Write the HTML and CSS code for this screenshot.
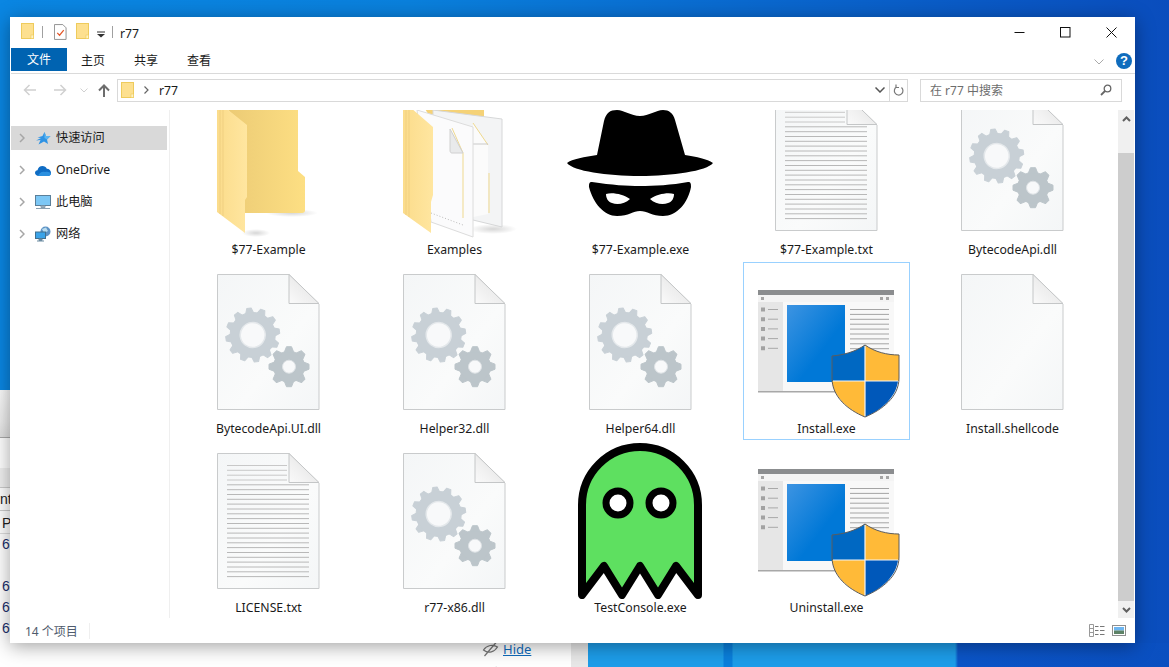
FILE: index.html
```html
<!DOCTYPE html>
<html lang="zh-CN">
<head>
<meta charset="utf-8">
<title>r77</title>
<link rel="stylesheet" href="styles.css">
</head>
<body>
<svg class="defs" aria-hidden="true">
  <defs>
    <linearGradient id="gBack" x1="0" y1="0" x2="1" y2="0"><stop offset="0" stop-color="#eccb75"/><stop offset="1" stop-color="#fddf83"/></linearGradient>
    <linearGradient id="gFront" x1="0" y1="0" x2="1" y2="0"><stop offset="0" stop-color="#fbdc8b"/><stop offset="1" stop-color="#ffe6a0"/></linearGradient>
    <linearGradient id="gBlue" x1="0" y1="0" x2="1" y2="1"><stop offset="0" stop-color="#3d94e2"/><stop offset=".6" stop-color="#0078d7"/></linearGradient>
    <linearGradient id="gDoc" x1="0" y1="0" x2="1" y2="1"><stop offset="0" stop-color="#f4f6f7"/><stop offset=".6" stop-color="#fafbfb"/><stop offset="1" stop-color="#f4f6f7"/></linearGradient>
    <linearGradient id="gFold" x1="0" y1="1" x2="1" y2="0"><stop offset="0" stop-color="#fafafa"/><stop offset="1" stop-color="#dfdfdf"/></linearGradient>
    <radialGradient id="gShadow"><stop offset="0" stop-color="#000" stop-opacity=".16"/><stop offset="1" stop-color="#000" stop-opacity="0"/></radialGradient>

    <path id="toothA" d="M-4 -22L-2.200 -27H2.200L4 -22Z"/>
    <path id="toothB" d="M-4.500 -15L-2.500 -20H2.500L4.500 -15Z"/>

    <symbol id="doc" viewBox="0 0 167 158">
      <path d="M33.500 12.500H105L135 42V147.500H33.500Z" fill="url(#gDoc)" stroke="#c9cbcc"/>
      <path d="M105 12.500V41.500H135Z" fill="url(#gFold)" stroke="#c4c6c7"/>
    </symbol>
    <symbol id="blank" viewBox="1 0 167 158"><use href="#doc"/></symbol>
    <symbol id="gears" viewBox="1 0 167 158">
      <use href="#doc"/>
      <g transform="translate(68.700 73) rotate(-8)" fill="#c8d0d6" stroke="#c8d0d6" stroke-linejoin="round">
        <circle r="22.500"/>
        <use href="#toothA"/>
        <use href="#toothA" transform="rotate(30)"/>
        <use href="#toothA" transform="rotate(60)"/>
        <use href="#toothA" transform="rotate(90)"/>
        <use href="#toothA" transform="rotate(120)"/>
        <use href="#toothA" transform="rotate(150)"/>
        <use href="#toothA" transform="rotate(180)"/>
        <use href="#toothA" transform="rotate(210)"/>
        <use href="#toothA" transform="rotate(240)"/>
        <use href="#toothA" transform="rotate(270)"/>
        <use href="#toothA" transform="rotate(300)"/>
        <use href="#toothA" transform="rotate(330)"/>
        <circle r="12.500" fill="#f8f9fa" stroke="#e4e8eb" stroke-width="1.500"/>
      </g>
      <g transform="translate(105 104.700)" fill="#bcc5ca" stroke="#bcc5ca" stroke-linejoin="round">
        <circle r="15.500"/>
        <use href="#toothB"/>
        <use href="#toothB" transform="rotate(45)"/>
        <use href="#toothB" transform="rotate(90)"/>
        <use href="#toothB" transform="rotate(135)"/>
        <use href="#toothB" transform="rotate(180)"/>
        <use href="#toothB" transform="rotate(225)"/>
        <use href="#toothB" transform="rotate(270)"/>
        <use href="#toothB" transform="rotate(315)"/>
        <circle r="6.500" fill="#f8f9fa" stroke="#dfe3e6"/>
      </g>
    </symbol>
    <symbol id="textdoc" viewBox="1 0 167 158">
      <use href="#doc"/>
      <path d="M43 24.500H103M43 29.300H103M43 34.200H103M43 39H103" stroke="#c8c8c8" fill="none"/>
      <path d="M43 43.800H125M43 48.700H125M43 53.500H125M43 58.300H125M43 63.100H125M43 68H125M43 72.800H125M43 77.600H125M43 82.500H125M43 87.300H125M43 92.100H125M43 97H125M43 101.800H125M43 106.600H125M43 111.500H125M43 116.300H125M43 121.100H125M43 126H125M43 130.800H125M43 135.600H125" stroke="#b8b8b8" fill="none"/>
    </symbol>
    <symbol id="folder" viewBox="1 0 167 158">
      <ellipse cx="108" cy="130" rx="26" ry="4" fill="url(#gShadow)"/>
      <ellipse cx="72" cy="150" rx="14" ry="4" fill="url(#gShadow)"/>
      <path d="M44 12H114V88L121 94V127.500C121 129 120 130 118 130H60V42L44 27Z" fill="url(#gBack)"/>
      <path d="M33 18L63 42V114L61 117V150L33 129Z" fill="url(#gFront)"/>
      <path d="M36 20V131M39 22V133" stroke="#f0cf80" fill="none"/>
    </symbol>
    <symbol id="folderdocs" viewBox="0 0 167 158">
      <ellipse cx="122" cy="146" rx="24" ry="5" fill="url(#gShadow)"/>
      <path d="M46 12H113V36H60Z" fill="#f5d277"/>
      <path d="M62 27L131 36V144L102 137L62 130Z" fill="#f3f4f5" stroke="#d6d7d8"/>
      <path d="M102 40L117 62V131L102 134Z" fill="#fbfbfb"/>
      <path d="M102 40L117 62M118 90V130" stroke="#efd98f" fill="none"/>
      <path d="M102 61H117" stroke="#c9c9c9" fill="none"/>
      <path d="M46 27L102 44V154L60 139Z" fill="#fbfbfc" stroke="#dcdcdc"/>
      <path d="M81 45L92 70V135" fill="none" stroke="#efd98f"/>
      <path d="M79 46L92 70H81C79.500 70 79 69 79 67Z" fill="#e9eaeb" stroke="#d0d0d0"/>
      <path d="M60 130L92 142" stroke="#bbb" stroke-dasharray="1 2" fill="none"/>
      <path d="M32 18L62 44V112L60 119V150L32 130Z" fill="url(#gFront)"/>
      <path d="M35 20V132M38 22V134" stroke="#f0cf80" fill="none"/>
    </symbol>
    <symbol id="spy" viewBox="0 0 167 158">
      <path d="M10 80C15 76 28 74 40 72L47 38C49 30 53 27 60 27C67 27 74 33 83 33C92 33 99 27 106 27C112 27 116 30 118 37L128 72C140 74 150 76 156 80C150 88 115 93 83 93C50 93 16 88 10 80Z" fill="#000"/>
      <path d="M35 99C55 102 70 103 83 103C97 103 115 102 131 99C134 99 134 101 134 104C131 120 120 133 106 133C95 133 90 128 83 128C76 128 72 133 60 133C47 133 36 120 32 104C32 101 32 99 35 99Z" fill="#000"/>
      <path d="M49 111C55 109 66 111 73 116C68 121 60 122 55 120C51 119 49 115 49 111Z" fill="#fff"/>
      <path d="M117 111C111 109 100 111 93 116C98 121 106 122 111 120C115 119 117 115 117 111Z" fill="#fff"/>
    </symbol>
    <symbol id="ghost" viewBox="0 0 167 158">
      <path d="M25 154V64A58 58 0 0 1 141 64V154L119 125L101 154L83 125L65 154L47 125Z" fill="#5ee060" stroke="#000" stroke-width="8" stroke-linejoin="round"/>
      <circle cx="61" cy="62" r="12" fill="#fff" stroke="#000" stroke-width="7"/>
      <circle cx="104" cy="62" r="12" fill="#fff" stroke="#000" stroke-width="7"/>
    </symbol>
    <symbol id="setup" viewBox="0 0 167 158">
      <rect x="15" y="28" width="136" height="102" fill="#f8f8f8"/>
      <rect x="15" y="28" width="136" height="5" fill="#8b8d8f"/>
      <rect x="15" y="33" width="136" height="7" fill="#f4f4f4"/>
      <rect x="15" y="40" width="25" height="90" fill="#e6e6e6"/>
      <rect x="15" y="129" width="136" height="1.500" fill="#a8a8a8"/>
      <path d="M143 35h3v3h-3zM137 35h3v3h-3zM18 35h3v3h-3z" fill="#a5a5a5"/>
      <rect x="44" y="43" width="58" height="77" fill="url(#gBlue)"/>
      <path d="M107 47.500H146M107 52.400H146M107 57.300H146M107 62.200H146M107 67.100H146M107 72H146M107 76.900H146M107 81.800H146M107 86.700H146" stroke="#a4a4a4" fill="none"/>
      <path d="M25 47.500H35M25 57.200H35M25 66.900H35M25 76.600H35M25 86.300H35" stroke="#a8a8a8" fill="none"/>
      <path d="M18 45.500h4v4h-4zM18 55.200h4v4h-4zM18 64.900h4v4h-4zM18 74.600h4v4h-4zM18 84.300h4v4h-4z" fill="#a2a2a2"/>
      <path d="M122 83C112 90 100 93 89 94V119H122Z" fill="#0068c2"/>
      <path d="M122 83C132 90 144 93 156 93V119H122Z" fill="#ffba38"/>
      <path d="M89 119C91 135 105 148 122 155V119Z" fill="#ffba38"/>
      <path d="M155 119C153 135 139 148 122 155V119Z" fill="#0058ba"/>
      <path d="M122 84V155M90 119H155" stroke="#f4f4f4" stroke-width="1.200" fill="none"/>
      <path d="M122 83C112 90 100 93 89 94V116C89 135 105 148 122 155C139 148 156 135 156 116V93C144 93 132 90 122 83Z" fill="none" stroke="#5c5c5c"/>
    </symbol>
    <symbol id="mini-folder" viewBox="0 0 14 18">
      <rect x=".5" y=".5" width="12" height="15" fill="#fde08f" stroke="#eecb5c"/>
      <rect x="10" y="12" width="2.500" height="3.500" fill="#fff3c4" stroke="#eecb5c" stroke-width=".6"/>
    </symbol>
  </defs>
</svg>

<div class="backwin">
  <div class="bw-head"></div>
  <div class="bw-space"></div>
  <div class="bw-band"></div>
  <div class="bw-row bw-tall"><span class="bw-clip">nt</span></div>
  <div class="bw-row bw-p">P</div>
  <div class="bw-num">6-</div>
  <div class="bw-num bw-gap">6-</div>
  <div class="bw-num">6-</div>
  <div class="bw-num">6-</div>
  <div class="bw-links">
    <div class="bw-link">
      <svg class="eye" viewBox="0 0 16 16"><path d="M1 9C4 4 11 3 15 6C12 11 6 13 1 9ZM2 15L14 1" fill="none" stroke="#777" stroke-width="1.200"/></svg>
      <span class="hide">Hide</span>
    </div>
    <div class="bw-link">
      <svg class="eye" viewBox="0 0 16 16"><path d="M1 9C4 4 11 3 15 6M2 15L14 1" fill="none" stroke="#777" stroke-width="1.200"/></svg>
      <span class="hide">Hide</span>
    </div>
  </div>
</div>

<main class="window">
  <header class="titlebar">
    <svg class="mini"><use href="#mini-folder"/></svg>
    <i class="qsep qsep-a"></i>
    <svg class="qdoc" viewBox="0 0 14 17"><path d="M.5.500H9.500L13 4V16.500H.5Z" fill="#fff" stroke="#8c8c8c"/><path d="M3.500 9.500L6 12L10.500 6.500" fill="none" stroke="#e4572a" stroke-width="1.300"/></svg>
    <svg class="mini mini-b"><use href="#mini-folder"/></svg>
    <svg class="qdrop" viewBox="0 0 8 8"><path d="M0 1.500H8V2.500H0ZM0 4H8L4 7.500Z" fill="#333"/></svg>
    <i class="qsep qsep-b"></i>
    <span class="wintitle">r77</span>
    <div class="controls">
      <svg class="ctl" viewBox="0 0 11 11"><path d="M.5 5.500H10.500" stroke="#111" fill="none"/></svg>
      <svg class="ctl" viewBox="0 0 11 11"><rect x=".5" y=".5" width="9.500" height="9.500" fill="none" stroke="#111"/></svg>
      <svg class="ctl" viewBox="0 0 11 11"><path d="M.5.500L10.500 10.500M10.500.500L.5 10.500" stroke="#111" fill="none"/></svg>
    </div>
  </header>

  <nav class="tabs">
    <span class="tab tab-file">文件</span>
    <span class="tab">主页</span>
    <span class="tab">共享</span>
    <span class="tab">查看</span>
    <svg class="rib-chev" viewBox="0 0 10 6"><path d="M.5.500L5 5L9.500.500" fill="none" stroke="#aaa"/></svg>
    <span class="help">?</span>
  </nav>

  <div class="addrrow">
    <svg class="navarrow" viewBox="0 0 14 12"><path d="M13 6H1.500M6.500 1L1.500 6L6.500 11" fill="none" stroke="#d0d0d0" stroke-width="1.500"/></svg>
    <svg class="navarrow fwd" viewBox="0 0 14 12"><path d="M1 6H12.500M7.500 1L12.500 6L7.500 11" fill="none" stroke="#d0d0d0" stroke-width="1.500"/></svg>
    <svg class="navdrop" viewBox="0 0 8 5"><path d="M.5.500L4 4L7.500.500" fill="none" stroke="#d0d0d0"/></svg>
    <svg class="navup" viewBox="0 0 12 13"><path d="M6 13V2M1 6.500L6 1.500L11 6.500" fill="none" stroke="#6d6d6d" stroke-width="2"/></svg>
    <div class="addr">
      <svg class="mini mini-addr"><use href="#mini-folder"/></svg>
      <svg class="crumb" viewBox="0 0 5 8"><path d="M.5.500L4 4L.5 7.500" fill="none" stroke="#666" stroke-width="1.200"/></svg>
      <span class="addrtext">r77</span>
      <svg class="addrdrop" viewBox="0 0 10 6"><path d="M.5.500L5 5L9.500.500" fill="none" stroke="#555" stroke-width="1.500"/></svg>
      <span class="refresh"><svg viewBox="0 0 11 12"><path d="M8.500 3.500A4.300 4.300 0 1 1 3.500 3M3 .5V3.500H6" fill="none" stroke="#777" stroke-width="1.200"/></svg></span>
    </div>
    <div class="search">
      <span class="searchtext">在 r77 中搜索</span>
      <svg class="lens" viewBox="0 0 12 12"><circle cx="7.500" cy="4.500" r="3.300" fill="none" stroke="#666" stroke-width="1.300"/><path d="M5 7L1 11" stroke="#666" stroke-width="1.800" fill="none"/></svg>
    </div>
  </div>

  <div class="body">
    <aside class="sidebar">
      <div class="navitem current">
        <svg class="chev" viewBox="0 0 6 10"><path d="M1 1L5 5L1 9" fill="none" stroke="#a6a6a6" stroke-width="1.500"/></svg>
        <svg class="navico" viewBox="0 0 16 16"><path d="M9.500 2L11 6H15.500L12 9.500L13 14L9 11.500L3.500 14.500L5.500 10L1 10.500L6 8L2.500 7.500L7.500 6Z" fill="#2f93e4"/><path d="M9.500 2L11 6H15.500L12 9.500L9.500 8Z" fill="#5db5f0"/></svg>
        <span>快速访问</span>
      </div>
      <div class="navitem">
        <svg class="chev" viewBox="0 0 6 10"><path d="M1 1L5 5L1 9" fill="none" stroke="#a6a6a6" stroke-width="1.500"/></svg>
        <svg class="navico" viewBox="0 0 16 16"><path d="M4 14C1.500 14 0 12.500 0 11C0 9.500 1 8.500 2.500 8.300C3 5.500 5 4 7.500 4C9.500 4 11 5 11.800 6.800C14.300 6.800 16 8.500 16 10.800C16 12.500 15 14 13 14Z" fill="#0f6cc4"/><path d="M3 14C4 11 7 9 10 10C13 9 16 10.500 16 12C15.500 13.300 14.500 14 13 14Z" fill="#2a8fdf"/></svg>
        <span>OneDrive</span>
      </div>
      <div class="navitem">
        <svg class="chev" viewBox="0 0 6 10"><path d="M1 1L5 5L1 9" fill="none" stroke="#a6a6a6" stroke-width="1.500"/></svg>
        <svg class="navico" viewBox="0 0 16 16"><rect x=".5" y="1.500" width="15" height="10" fill="#7cc7f5" stroke="#5b7f99"/><path d="M6 12H10V13.500H6ZM1 14.500H15" stroke="#8aa0b0" fill="#a9bcc9"/></svg>
        <span>此电脑</span>
      </div>
      <div class="navitem">
        <svg class="chev" viewBox="0 0 6 10"><path d="M1 1L5 5L1 9" fill="none" stroke="#a6a6a6" stroke-width="1.500"/></svg>
        <svg class="navico" viewBox="0 0 16 16"><circle cx="10.500" cy="5.500" r="5" fill="#5e93c5"/><path d="M7 3L11 1.500L13 5L9 7Z" fill="#b9dcef"/><rect x=".5" y="6" width="10" height="6.500" fill="#3ba3e8" stroke="#41708f"/><path d="M4 13H7V14.500H4ZM2 15H9" stroke="#6b8ba1" fill="#6b8ba1"/></svg>
        <span>网络</span>
      </div>
    </aside>

    <section class="content">
      <div class="grid">
        <figure class="tile"><svg class="thumb"><use href="#folder"/></svg><figcaption>$77-Example</figcaption></figure>
        <figure class="tile"><svg class="thumb"><use href="#folderdocs"/></svg><figcaption>Examples</figcaption></figure>
        <figure class="tile"><svg class="thumb"><use href="#spy"/></svg><figcaption>$77-Example.exe</figcaption></figure>
        <figure class="tile"><svg class="thumb"><use href="#textdoc"/></svg><figcaption>$77-Example.txt</figcaption></figure>
        <figure class="tile"><svg class="thumb"><use href="#gears"/></svg><figcaption>BytecodeApi.dll</figcaption></figure>
        <figure class="tile"><svg class="thumb"><use href="#gears"/></svg><figcaption>BytecodeApi.UI.dll</figcaption></figure>
        <figure class="tile"><svg class="thumb"><use href="#gears"/></svg><figcaption>Helper32.dll</figcaption></figure>
        <figure class="tile"><svg class="thumb"><use href="#gears"/></svg><figcaption>Helper64.dll</figcaption></figure>
        <figure class="tile selected"><svg class="thumb"><use href="#setup"/></svg><figcaption>Install.exe</figcaption></figure>
        <figure class="tile"><svg class="thumb"><use href="#blank"/></svg><figcaption>Install.shellcode</figcaption></figure>
        <figure class="tile"><svg class="thumb"><use href="#textdoc"/></svg><figcaption>LICENSE.txt</figcaption></figure>
        <figure class="tile"><svg class="thumb"><use href="#gears"/></svg><figcaption>r77-x86.dll</figcaption></figure>
        <figure class="tile"><svg class="thumb"><use href="#ghost"/></svg><figcaption>TestConsole.exe</figcaption></figure>
        <figure class="tile"><svg class="thumb"><use href="#setup"/></svg><figcaption>Uninstall.exe</figcaption></figure>
      </div>
    </section>

    <div class="scrollbar">
      <span class="sb-btn"><svg viewBox="0 0 9 6"><path d="M1 5L4.500 1.500L8 5" fill="none" stroke="#606060" stroke-width="2"/></svg></span>
      <span class="sb-track"></span>
      <span class="sb-thumb"></span>
      <span class="sb-btn"><svg viewBox="0 0 9 6"><path d="M1 1L4.500 4.500L8 1" fill="none" stroke="#606060" stroke-width="2"/></svg></span>
    </div>
  </div>

  <footer class="status">
    <span class="count">14 个项目</span>
    <i class="status-sep"></i>
    <svg class="view-list" viewBox="0 0 16 13"><path d="M.5.500H4.500V12.500H.5ZM.5 4.500H4.500M.5 8.500H4.500" fill="#fff" stroke="#999"/><path d="M6 2.500H9.500M11 2.500H15.500M6 6.500H9.500M11 6.500H15.500M6 10.500H9.500M11 10.500H15.500" stroke="#777" fill="none"/></svg>
    <svg class="view-big" viewBox="0 0 14 11"><rect x=".5" y=".5" width="13" height="10" fill="#fff" stroke="#8f8f8f"/><rect x="2" y="2" width="10" height="3.500" fill="#6db6f2"/><rect x="2" y="5.500" width="10" height="3.500" fill="#5d8266"/></svg>
  </footer>
</main>
</body>
</html>
```
FILE: styles.css
```css
* { box-sizing: border-box; }
html, body { height: 100%; }
body {
  margin: 0;
  overflow: hidden;
  position: relative;
  font-family: "Noto Sans", "Noto Sans CJK SC", sans-serif;
  font-size: 12px;
  color: #1a1a1a;
  background-color: #0a4fbf;
  background-image:
    linear-gradient(90deg, transparent 723px, #0a7fdc 724px, #0a7fdc 732px, transparent 733px),
    linear-gradient(90deg, #1d9de9 0, #1d9de9 955px, #0b55c8 958px, #0a4fc0 100%),
    linear-gradient(90deg, #0a86e2 0, #0a80dc 35%, #0a64cc 70%, #0a4dbd 100%);
  background-size: 100% 24px, 100% 24px, 100% 100%;
  background-position: 0 100%, 0 100%, 0 0;
  background-repeat: no-repeat;
}
.defs { position: absolute; width: 0; height: 0; }

.backwin {
  position: absolute;
  left: 0;
  top: 390px;
  width: 588px;
  height: 277px;
  display: flex;
  flex-direction: column;
  background: #fff;
  border-right: 17px solid #e8e8e8;
  font-family: "Liberation Sans", sans-serif;
  font-size: 14px;
  color: #1a2f6b;
}
.bw-head {
  height: 48px;
  flex: none;
  background: linear-gradient(#fbfbfb, #ececec 70%, #e0e0e0);
  border-bottom: 1px solid #a9a9a9;
}
.bw-space { height: 30px; flex: none; }
.bw-band { height: 19px; flex: none; background: #f0f0f0; }
.bw-row { color: #222; padding-left: 2px; flex: none; }
.bw-tall { height: 23px; line-height: 23px; border-top: 1px solid #ccc; overflow: hidden; }
.bw-clip { margin-left: -2px; }
.bw-p { height: 24px; line-height: 24px; border-top: 1px solid #ccc; border-bottom: 1px solid #ddd; }
.bw-num { height: 21px; line-height: 21px; padding-left: 2px; flex: none; }
.bw-gap { margin-top: 21px; }
.bw-links {
  position: absolute;
  left: 482px;
  top: 250px;
  display: flex;
  flex-direction: column;
  gap: 7px;
}
.bw-link { display: flex; align-items: center; gap: 4px; height: 18px; }
.eye { width: 17px; height: 16px; }
.hide { color: #0f6cbd; text-decoration: underline; font-family: "Noto Sans", sans-serif; font-size: 13px; }

.window {
  position: absolute;
  left: 10px;
  top: 17px;
  width: 1125px;
  height: 626px;
  display: flex;
  flex-direction: column;
  background: #fff;
  padding-left: 1px;
  box-shadow: 0 3px 18px rgba(0, 0, 0, .38);
}

.titlebar { height: 30px; display: flex; align-items: center; flex: none; position: relative; }
.mini { width: 14px; height: 18px; margin-left: 10px; flex: none; }
.mini-b { margin-left: 9px; }
.qsep { width: 1px; height: 12px; background: #a0a0a0; flex: none; }
.qsep-a { margin-left: 7px; }
.qdoc { width: 13px; height: 16px; margin-left: 11px; flex: none; }
.qdrop { width: 8px; height: 8px; margin-left: 7px; margin-top: 3px; flex: none; }
.qsep-b { margin-left: 7px; }
.wintitle { margin-left: 7px; margin-top: 2px; font-size: 12.2px; }
.controls { margin-left: auto; display: flex; gap: 35px; margin-right: 18px; }
.ctl { width: 11px; height: 11px; display: block; }

.tabs {
  height: 27px;
  flex: none;
  display: flex;
  align-items: flex-start;
  padding-top: 1px;
  border-bottom: 1px solid #dadada;
  position: relative;
}
.tab { width: 53px; height: 23px; line-height: 26px; padding-right: 1px; text-align: center; font-size: 12px; }
.tab-file { width: 56px; padding-right: 0; line-height: 24px; background: #0063b1; color: #fff; }
.rib-chev { width: 10px; height: 6px; margin-left: auto; margin-top: 11px; margin-right: 12px; }
.help {
  width: 16px; height: 16px; border-radius: 50%;
  background: #0f6cbd; color: #fff;
  margin-top: 5px; margin-right: 3px;
  font: bold 13px/16px "Liberation Sans", sans-serif;
  text-align: center;
}

.addrrow { height: 36px; flex: none; display: flex; align-items: center; padding-bottom: 4px; }
.navarrow { width: 14px; height: 12px; margin-left: 12px; flex: none; }
.fwd { margin-left: 16px; }
.navdrop { width: 8px; height: 5px; margin-left: 13px; flex: none; }
.navup { width: 12px; height: 13px; margin-left: 10px; flex: none; }
.addr {
  margin-left: 7px;
  width: 791px;
  height: 23px;
  border: 1px solid #d9d9d9;
  display: flex;
  align-items: center;
  flex: none;
}
.mini-addr { margin-left: 3px; margin-top: 1px; }
.crumb { width: 5px; height: 8px; margin-left: 9px; }
.addrtext { margin-left: 10px; font-size: 12.2px; }
.addrdrop { width: 10px; height: 6px; margin-left: auto; margin-right: 2px; }
.refresh {
  width: 18px; height: 100%;
  border-left: 1px solid #d9d9d9;
  margin-left: 2px;
  display: flex; align-items: center; justify-content: center;
}
.refresh svg { width: 11px; height: 12px; }
.search {
  margin-left: 12px;
  width: 202px;
  height: 23px;
  border: 1px solid #d9d9d9;
  display: flex;
  align-items: center;
  justify-content: space-between;
  padding: 0 9px;
  flex: none;
}
.searchtext { color: #6d6d6d; }
.lens { width: 12px; height: 12px; }

.body { flex: 1; min-height: 0; display: flex; }
.sidebar { width: 159px; flex: none; border-right: 1px solid #efefef; padding: 16px 2px 0 0; display: flex; flex-direction: column; gap: 8px; }
.navitem { height: 24px; display: flex; align-items: center; padding-left: 8px; }
.navitem span { margin-top: -2px; font-size: 12.2px; }
.navitem.current { background: #d9d9d9; }
.chev { width: 6px; height: 10px; flex: none; }
.navico { width: 16px; height: 16px; margin-left: 10px; margin-right: 5px; flex: none; }

.content { flex: 1; min-width: 0; overflow: hidden; }
.grid {
  display: grid;
  grid-template-columns: repeat(5, 167px);
  grid-auto-rows: 178px;
  column-gap: 19px;
  row-gap: 1px;
  margin-top: -27px;
  padding-left: 15px;
}
.tile { margin: 0; display: flex; flex-direction: column; align-items: center; }
.tile.selected { box-shadow: inset 0 0 0 1px #99d1ff; }
.thumb { width: 167px; height: 158px; flex: none; display: block; }
.tile figcaption { height: 18px; line-height: 18px; font-size: 12.25px; text-align: center; white-space: nowrap; color: #1a1a1a; }

.scrollbar { width: 16px; flex: none; margin-right: 1px; display: flex; flex-direction: column; background: #f0f0f0; }
.sb-btn { height: 17px; flex: none; display: flex; align-items: center; justify-content: center; }
.sb-btn svg { width: 9px; height: 6px; }
.sb-track { height: 26px; flex: none; }
.sb-thumb { flex: 1; background: #cdcdcd; }

.status { height: 25px; flex: none; display: flex; align-items: center; color: #4f5b6d; }
.count { margin-left: 14px; }
.status-sep { width: 1px; height: 16px; background: #efefef; margin-left: 11px; }
.view-list { width: 16px; height: 13px; margin-left: auto; }
.view-big { width: 14px; height: 11px; margin-left: 7px; margin-right: 9px; }
```
